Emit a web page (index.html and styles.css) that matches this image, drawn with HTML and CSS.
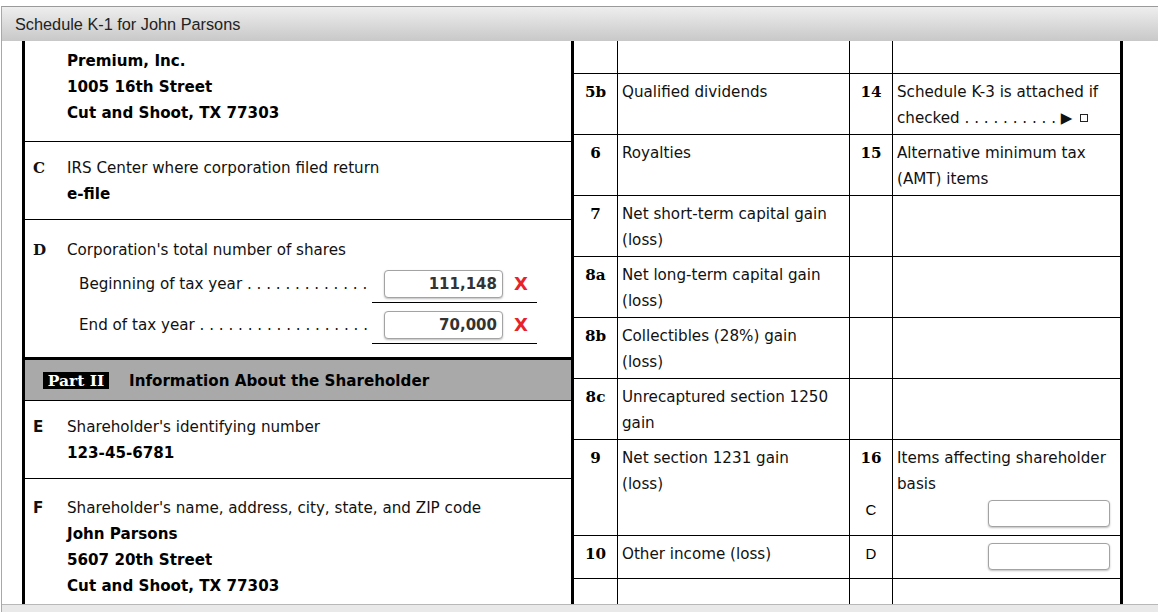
FILE: index.html
```
<!DOCTYPE html>
<html>
<head>
<meta charset="utf-8">
<title>Schedule K-1</title>
<link rel="stylesheet" href="styles.css">
</head>
<body>
<div class="dialog">
  <div class="titlebar">Schedule K-1 for John Parsons</div>
  <div class="viewport">
    <div class="form">
      <div class="left">
        <div class="sec sec-b">
          <div class="letter serif"></div>
          <div>
            <div class="blank"></div>
            <div class="val">Premium, Inc.</div>
            <div class="val">1005 16th Street</div>
            <div class="val">Cut and Shoot, TX 77303</div>
          </div>
        </div>
        <div class="sec sec-c">
          <div class="letter serif">C</div>
          <div>
            <div>IRS Center where corporation filed return</div>
            <div class="val">e-file</div>
          </div>
        </div>
        <div class="sec sec-d">
          <div class="letter serif">D</div>
          <div>
            <div>Corporation's total number of shares</div>
            <div class="subrow">
              <div class="sublabel">Beginning of tax year . . . . . . . . . . . . .</div>
              <div class="entry"><input class="amount" type="text" value="111,148" readonly><span class="err">X</span></div>
            </div>
            <div class="subrow subrow-2">
              <div class="sublabel">End of tax year . . . . . . . . . . . . . . . . . .</div>
              <div class="entry"><input class="amount" type="text" value="70,000" readonly><span class="err">X</span></div>
            </div>
          </div>
        </div>
        <div class="parthead">
          <span class="partbox">Part II</span>
          <span class="parttitle">Information About the Shareholder</span>
        </div>
        <div class="sec sec-e">
          <div class="letter">E</div>
          <div>
            <div>Shareholder's identifying number</div>
            <div class="val">123-45-6781</div>
          </div>
        </div>
        <div class="sec sec-f">
          <div class="letter">F</div>
          <div>
            <div>Shareholder's name, address, city, state, and ZIP code</div>
            <div class="val">John Parsons</div>
            <div class="val">5607 20th Street</div>
            <div class="val">Cut and Shoot, TX 77303</div>
          </div>
        </div>
      </div>
      <div class="right">
        <div class="row r-top"><div></div><div></div><div></div><div></div></div>
        <div class="row">
          <div class="num">5b</div><div class="txt">Qualified dividends</div>
          <div class="num">14</div><div class="txt">Schedule K-3 is attached if<br>checked . . . . . . . . . . <span class="tri">&#9654;</span> <span class="chk"></span></div>
        </div>
        <div class="row">
          <div class="num">6</div><div class="txt">Royalties</div>
          <div class="num">15</div><div class="txt">Alternative minimum tax<br>(AMT) items</div>
        </div>
        <div class="row">
          <div class="num">7</div><div class="txt">Net short-term capital gain<br>(loss)</div>
          <div></div><div></div>
        </div>
        <div class="row">
          <div class="num">8a</div><div class="txt">Net long-term capital gain<br>(loss)</div>
          <div></div><div></div>
        </div>
        <div class="row">
          <div class="num">8b</div><div class="txt">Collectibles (28%) gain<br>(loss)</div>
          <div></div><div></div>
        </div>
        <div class="row">
          <div class="num">8c</div><div class="txt">Unrecaptured section 1250<br>gain</div>
          <div></div><div></div>
        </div>
        <div class="row r-nine">
          <div class="num">9</div><div class="txt">Net section 1231 gain<br>(loss)</div>
          <div class="num"><div>16</div><div class="code code-c">C</div></div>
          <div class="txt"><div>Items affecting shareholder<br>basis</div><input class="box box-c" type="text" readonly></div>
        </div>
        <div class="row r-ten">
          <div class="num">10</div><div class="txt">Other income (loss)</div>
          <div class="num"><div class="code">D</div></div>
          <div class="boxcell"><input class="box" type="text" readonly></div>
        </div>
        <div class="row r-last"><div></div><div></div><div></div><div></div></div>
      </div>
    </div>
  </div>
  <div class="footer"></div>
</div>
</body>
</html>
```

FILE: styles.css
```
* { box-sizing: border-box; }
html, body { margin: 0; padding: 0; background: #fff; }
body {
  width: 1158px;
  height: 612px;
  overflow: hidden;
  font-family: "DejaVu Sans", Verdana, sans-serif;
  font-size: 15.15px;
  color: #111;
}
.dialog {
  margin: 6px 0 0 1px;
  width: 1157px;
  height: 606px;
  border-top: 1px solid #9a9a9a;
  border-left: 1px solid #a8a8a8;
  display: flex;
  flex-direction: column;
}
.titlebar {
  flex: none;
  height: 34px;
  background: linear-gradient(#eeeeee, #c8c8c8);
  font-family: "Liberation Sans", Arial, sans-serif;
  font-size: 16.3px;
  color: #222;
  display: flex;
  align-items: center;
  padding-left: 13px;
}
.viewport { flex: none; height: 563px; overflow: hidden; background: #fff; }
.footer { flex: 1; border-top: 1px solid #b8b8b8; background: #e9e9e9; }

.form {
  margin: -20px 0 0 20px;
  width: 1101px;
  display: flex;
  border-left: 3px solid #000;
  border-right: 3px solid #000;
}
.left { flex: none; width: 549px; border-right: 3px solid #000; }
.right { flex: none; width: 546px; }

.sec {
  display: grid;
  grid-template-columns: 42px 1fr;
  line-height: 26px;
  border-bottom: 1px solid #000;
}
.blank { height: 26px; }
.letter { padding-left: 8px; font-weight: bold; }
.letter.serif { font-family: "DejaVu Serif", Georgia, serif; }
.val { font-weight: bold; color: #000; }
.sec-b { padding: 1px 0 15px; }
.sec-c { padding: 13px 0 12px; }
.sec-d { padding: 17px 0 13px; border-bottom: none; }
.sec-e { padding: 13px 0 12px; }
.sec-f { padding: 16px 0 10px; border-bottom: none; }

.subrow { display: flex; align-items: flex-start; }
.sublabel {
  width: 305px;
  padding: 8px 0 0 12px;
  white-space: nowrap;
  overflow: hidden;
  line-height: 26px;
}
.entry {
  width: 165px;
  border-bottom: 1px solid #000;
  padding: 7px 0 4px 12px;
  display: flex;
  align-items: center;
}
.subrow-2 .sublabel { padding-top: 9px; }
.subrow-2 .entry { padding-top: 8px; }
.amount {
  width: 119px;
  height: 28px;
  margin: 0;
  border: 1px solid #a3a3a3;
  border-radius: 4px;
  box-shadow: 0 1px 2px rgba(0, 0, 0, 0.25);
  background: #fff;
  font-family: "DejaVu Sans", Verdana, sans-serif;
  font-size: 15px;
  font-weight: bold;
  color: #333;
  text-align: right;
  padding: 0 5px 0 0;
  outline: none;
}
.err {
  margin-left: 11px;
  color: #e8222a;
  font-weight: bold;
  font-size: 18px;
  line-height: 20px;
}

.parthead {
  height: 44px;
  border-top: 3px solid #000;
  border-bottom: 1px solid #000;
  background: #a9a9a9;
  display: flex;
  align-items: center;
  padding-left: 18px;
  padding-top: 1px;
}
.partbox {
  background: #000;
  color: #fff;
  font-family: "DejaVu Serif", Georgia, serif;
  font-weight: bold;
  font-size: 15.5px;
  line-height: 17px;
  width: 66px;
  text-align: center;
}
.parttitle { margin-left: 20px; font-weight: bold; color: #000; }

.row {
  display: grid;
  grid-template-columns: 44px 232px 43px 227px;
  height: 61px;
  border-bottom: 1px solid #000;
  line-height: 26px;
}
.row > div { border-right: 1px solid #000; }
.row > div:last-child { border-right: none; }
.num {
  text-align: center;
  font-family: "DejaVu Serif", Georgia, serif;
  font-weight: bold;
  padding-top: 5px;
  color: #000;
}
.txt { padding: 5px 0 0 4px; }
.r-top { height: 53px; }
.r-nine { height: 96px; }
.r-ten { height: 43px; }
.r-last { height: 60px; border-bottom: none; }
.code {
  font-family: "Liberation Sans", Arial, sans-serif;
  font-weight: normal;
  font-size: 15px;
}
.code-c { margin-top: 26px; }
.tri { font-size: 15px; }
.chk {
  display: inline-block;
  width: 8px;
  height: 8px;
  border: 1px solid #222;
  margin-left: 3px;
  vertical-align: 1px;
}
.box {
  display: block;
  width: 122px;
  height: 27px;
  margin: 0 10px 0 auto;
  border: 1px solid #a3a3a3;
  border-radius: 4px;
  box-shadow: 0 1px 2px rgba(0, 0, 0, 0.25);
  background: #fff;
  outline: none;
}
.box-c { margin-top: 3px; }
.boxcell { padding-top: 7px; }
```
